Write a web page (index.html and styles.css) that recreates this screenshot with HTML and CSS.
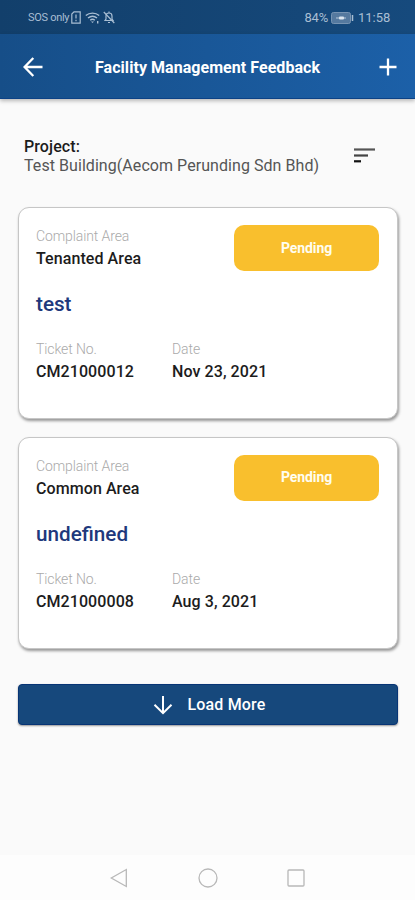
FILE: index.html
```html
<!DOCTYPE html>
<html lang="en">
<head>
<meta charset="utf-8">
<title>Facility Management Feedback</title>
<link rel="stylesheet" href="styles.css">
</head>
<body>
<div class="status">
  <span class="carrier">SOS only</span>
  <svg class="sim" width="10" height="13" viewBox="0 0 10 13" fill="none" stroke="currentColor" stroke-width="1.200"><path d="M3 .8h6.2v11.4H.8V3z"/><path d="M5 3.500v4M5 8.800v1.500"/></svg>
  <svg class="wifi" width="15" height="12" viewBox="0 0 15 12" fill="none" stroke="currentColor" stroke-width="1.400"><path d="M.8 3.500C4.500.3 10.500.3 14.200 3.500M3 6c2.800-2.300 6.200-2.300 9 0M5.200 8.300c1.400-1.200 3.200-1.200 4.600 0"/><path d="M6 9.500h3L7.500 11z" fill="currentColor" stroke="none"/><path d="M12.700 9v2.500"/></svg>
  <svg class="bell" width="12" height="13" viewBox="0 0 12 13" fill="none" stroke="currentColor" stroke-width="1.200"><path d="M2 9.500h8L9 8V5c0-2-1.200-3-3-3S3 3 3 5v3zM6 .5V2M5 11.500h2"/><path d="M.8 1l10.500 11"/></svg>
  <span class="percent">84%</span>
  <svg class="battery" width="23" height="12" viewBox="0 0 23 12"><rect x=".5" y=".5" width="19" height="11" rx="2" fill="#55799f" stroke="#7794b3"/><path d="M5 6h10" stroke="#b9cadb"/><rect x="8" y="4.500" width="5" height="3" rx="1" fill="#dbe5ef"/><path d="M21.500 3v6" stroke="#a9bed3" stroke-width="1.500"/></svg>
  <span class="clock">11:58</span>
</div>
<header class="header">
  <svg class="back" width="20" height="20" viewBox="0 0 20 20" fill="none" stroke="#fff" stroke-width="2.300"><path d="M19.500 10H2M10.300 1L1.600 10l8.700 9"/></svg>
  <h1>Facility Management Feedback</h1>
  <svg class="plus" width="18" height="18" viewBox="0 0 18 18" stroke="#fff" stroke-width="2.300"><path d="M9 .5v17M.5 9h17"/></svg>
</header>
<main>
  <section class="project">
    <div><div class="label">Project:</div><div class="name">Test Building(Aecom Perunding Sdn Bhd)</div></div>
    <svg width="21" height="15" viewBox="0 0 21 15" stroke-width="2.200"><path d="M0 1.500h21" stroke="#555"/><path d="M0 7.500h14" stroke="#444"/><path d="M0 13.300h7" stroke="#111"/></svg>
  </section>
  <article class="card">
    <div class="top"><div><div class="caption">Complaint Area</div><div class="value">Tenanted Area</div></div><div class="badge">Pending</div></div>
    <h2>test</h2>
    <div class="details"><div><div class="caption">Ticket No.</div><div class="value">CM21000012</div></div><div><div class="caption">Date</div><div class="value">Nov 23, 2021</div></div></div>
  </article>
  <article class="card">
    <div class="top"><div><div class="caption">Complaint Area</div><div class="value">Common Area</div></div><div class="badge">Pending</div></div>
    <h2>undefined</h2>
    <div class="details"><div><div class="caption">Ticket No.</div><div class="value">CM21000008</div></div><div><div class="caption">Date</div><div class="value">Aug 3, 2021</div></div></div>
  </article>
  <button class="load"><svg width="20" height="20" viewBox="0 0 20 20" fill="none" stroke="#fff" stroke-width="2"><path d="M10 1v17M1.500 9.800L10 18.200l8.500-8.400"/></svg><span>Load More</span></button>
</main>
<nav class="nav">
  <svg width="18" height="20" viewBox="0 0 18 20"><path d="M16.300 1.500v17L1.300 10z"/></svg>
  <svg width="20" height="20" viewBox="0 0 20 20"><circle cx="10" cy="10" r="9"/></svg>
  <svg width="18" height="18" viewBox="0 0 18 18"><rect x="1" y="1" width="16" height="16" rx="1"/></svg>
</nav>
</body>
</html>
```
FILE: styles.css
```css
* { box-sizing: border-box; }
body { margin: 0; width: 415px; height: 900px; display: flex; flex-direction: column; overflow: hidden; background: #fafafa; color: #1c1c1c; font-family: Roboto, sans-serif; }
svg { display: block; flex: none; }
h1, h2 { margin: 0; }
.status { height: 34px; padding: 1px 24px 0 28px; display: flex; align-items: center; color: #a9bed3; background: linear-gradient(90deg, #123f6b, #164a7d); white-space: nowrap; }
.carrier { width: 42px; font-size: 11px; letter-spacing: -.3px; }
.sim { margin-left: 1px; }
.wifi { margin-left: 4px; }
.bell { margin-left: 3px; }
.percent { margin-left: auto; font-size: 13px; letter-spacing: -.2px; }
.battery { margin-left: 3px; }
.clock { width: 33px; margin-left: 4px; font-size: 13px; }
.header { height: 65px; padding: 1px 18px 0 23px; display: flex; align-items: center; background: linear-gradient(90deg, #164e88, #1c60a8); border-bottom: 1px solid #0c4286; box-shadow: 0 2px 4px #0004; }
.plus { margin-left: auto; }
h1 { margin-left: 52px; padding-top: 1px; color: #fff; font-size: 16px; font-weight: 700; white-space: nowrap; letter-spacing: .05px; }
main { flex: 1; padding: 38px 17px 0 18px; }
.project { height: 70px; padding: 0 23px 0 6px; display: flex; justify-content: space-between; font-size: 16px; line-height: 19px; }
.project svg { margin-top: 11px; }
.label { font-weight: 500; letter-spacing: .1px; }
.name { color: #555; white-space: nowrap; letter-spacing: .06px; }
.card { height: 212px; margin-bottom: 17.500px; padding: 17px 18px 0 17px; background: #fff; border: 1px solid #c6c6c6; border-radius: 11px; box-shadow: 1px 2px 3px #0006; }
.top { height: 66px; display: flex; justify-content: space-between; }
.caption { height: 22px; line-height: 22px; font-size: 14px; font-weight: 300; color: #aaa; letter-spacing: -.1px; }
.value { height: 22px; line-height: 24px; font-size: 16px; font-weight: 500; white-space: nowrap; letter-spacing: .08px; }
.badge { width: 145px; height: 46px; border-radius: 10px; background: #f9bf2d; color: #fffdf0; font-size: 14px; font-weight: 700; letter-spacing: -.1px; padding-bottom: 1px; display: flex; align-items: center; justify-content: center; }
h2 { height: 47px; line-height: 26px; font-size: 20.700px; font-weight: 500; color: #20387c; }
.details { display: grid; grid-template-columns: 136px 1fr; }
.load { width: 380px; height: 41px; margin-top: 35px; padding: 1px 0 0 2px; display: flex; align-items: center; justify-content: center; gap: 15px; border: 1px solid #073475; border-radius: 4px; background: #16487c; color: #fff; font: 500 16px Roboto, sans-serif; letter-spacing: .15px; box-shadow: 0 1px 2px #0006; }
.nav { height: 45px; padding: 0 110px; display: flex; align-items: center; justify-content: space-between; background: #fdfdfd; }
.nav svg { fill: none; stroke: #b8b8b8; stroke-width: 1.300; }
```
